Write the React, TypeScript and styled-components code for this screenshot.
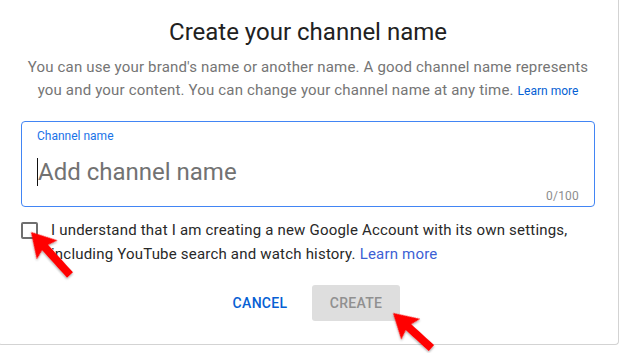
import React from "react";
import styled, { createGlobalStyle } from "styled-components";

const Global = createGlobalStyle`
  html, body { margin: 0; padding: 0; background: #ffffff; }
  body { font-family: Roboto, "Noto Sans", Arial, sans-serif; }
`;

const Page = styled.div`
  position: relative;
  width: 621px;
  height: 353px;
  overflow: hidden;
  background: #ffffff;
`;

const Dialog = styled.div`
  box-sizing: border-box;
  margin-left: -2px;
  width: 621px;
  height: 345px;
  padding: 16px 23px 23px 22px;
  border: 1px solid #d3d3d3;
  border-top: none;
  border-radius: 0 0 4px 4px;
  display: flex;
  flex-direction: column;
  align-items: stretch;
`;

const Title = styled.h1`
  margin: 0;
  font-size: 24px;
  line-height: 32px;
  font-weight: 400;
  color: #212121;
  text-align: center;
`;

const Subtitle = styled.p`
  margin: 8px 0 0;
  font-size: 15px;
  line-height: 23px;
  letter-spacing: 0.17px;
  color: #757575;
  text-align: center;
`;

const SmallLink = styled.a`
  font-size: 12px;
  letter-spacing: 0;
  color: #065fd4;
  text-decoration: none;
`;

const Field = styled.div`
  box-sizing: border-box;
  margin-top: 18px;
  height: 86px;
  border: 1px solid #4285f4;
  border-radius: 4px;
  padding: 7px 15px 3px 15px;
  display: flex;
  flex-direction: column;
`;

const FieldLabel = styled.label`
  font-size: 12px;
  line-height: 14px;
  color: #1a73e8;
`;

const InputRow = styled.div`
  margin-top: 15px;
  height: 28px;
  display: flex;
  align-items: center;
`;

const Caret = styled.span`
  width: 1px;
  height: 28px;
  background: #111111;
`;

const Placeholder = styled.span`
  font-size: 24px;
  line-height: 28px;
  color: #727272;
`;

const Counter = styled.div`
  margin-top: 3px;
  font-size: 12px;
  line-height: 14px;
  letter-spacing: 0.2px;
  color: #8d8d8d;
  text-align: right;
`;

const CheckRow = styled.div`
  margin-top: 11px;
  display: flex;
  align-items: flex-start;
  gap: 13px;
`;

const CheckBox = styled.span`
  box-sizing: border-box;
  flex: none;
  margin-top: 4px;
  width: 17px;
  height: 17px;
  border: 2px solid #6f6f6f;
  border-radius: 2px;
`;

const CheckText = styled.p`
  margin: 0;
  font-size: 15px;
  line-height: 24px;
  letter-spacing: 0.2px;
  color: #282828;
`;

const Link = styled.a`
  color: #3c5fd4;
  text-decoration: none;
`;

const Actions = styled.div`
  margin-top: 19px;
  display: flex;
  justify-content: center;
  gap: 8px;
`;

const Button = styled.button<{ $variant: "text" | "disabled" }>`
  box-sizing: border-box;
  height: 36px;
  min-width: 88px;
  padding: 0 16px;
  border: none;
  border-radius: 3px;
  font-family: Roboto, Arial, sans-serif;
  font-size: 14px;
  font-weight: 500;
  letter-spacing: 0.3px;
  background: ${(p) => (p.$variant === "disabled" ? "#dedede" : "transparent")};
  color: ${(p) => (p.$variant === "disabled" ? "#909090" : "#065fd4")};
`;

const Overlay = styled.svg`
  position: absolute;
  left: 0;
  top: 0;
  pointer-events: none;
`;

const Arrow: React.FC<{ x: number; y: number; angle: number; length: number }> = ({
  x,
  y,
  angle,
  length,
}) => (
  <g transform={`translate(${x} ${y}) rotate(${angle})`} filter="url(#arrowShadow)">
    <polygon
      points={`0,0 24,-14 21,-4 ${length},-4 ${length},4 21,4 24,14`}
      fill="#ff0000"
    />
  </g>
);

export default function App() {
  return (
    <Page>
      <Global />
      <Dialog>
        <Title>Create your channel name</Title>
        <Subtitle>
          You can use your brand's name or another name. A good channel name represents
          <br />
          you and your content. You can change your channel name at any time.{" "}
          <SmallLink href="#">Learn more</SmallLink>
        </Subtitle>
        <Field>
          <FieldLabel>Channel name</FieldLabel>
          <InputRow>
            <Caret />
            <Placeholder>Add channel name</Placeholder>
          </InputRow>
          <Counter>0/100</Counter>
        </Field>
        <CheckRow>
          <CheckBox />
          <CheckText>
            I understand that I am creating a new Google Account with its own settings,
            <br />
            including YouTube search and watch history. <Link href="#">Learn more</Link>
          </CheckText>
        </CheckRow>
        <Actions>
          <Button $variant="text">CANCEL</Button>
          <Button $variant="disabled">CREATE</Button>
        </Actions>
      </Dialog>
      <Overlay width="621" height="353" viewBox="0 0 621 353">
        <defs>
          <filter id="arrowShadow" x="-30%" y="-30%" width="160%" height="160%">
            <feDropShadow dx="1" dy="1" stdDeviation="1" floodColor="#000" floodOpacity="0.35" />
          </filter>
        </defs>
        <Arrow x={31} y={232} angle={47.8} length={58} />
        <Arrow x={393} y={313} angle={42.4} length={52} />
      </Overlay>
    </Page>
  );
}
